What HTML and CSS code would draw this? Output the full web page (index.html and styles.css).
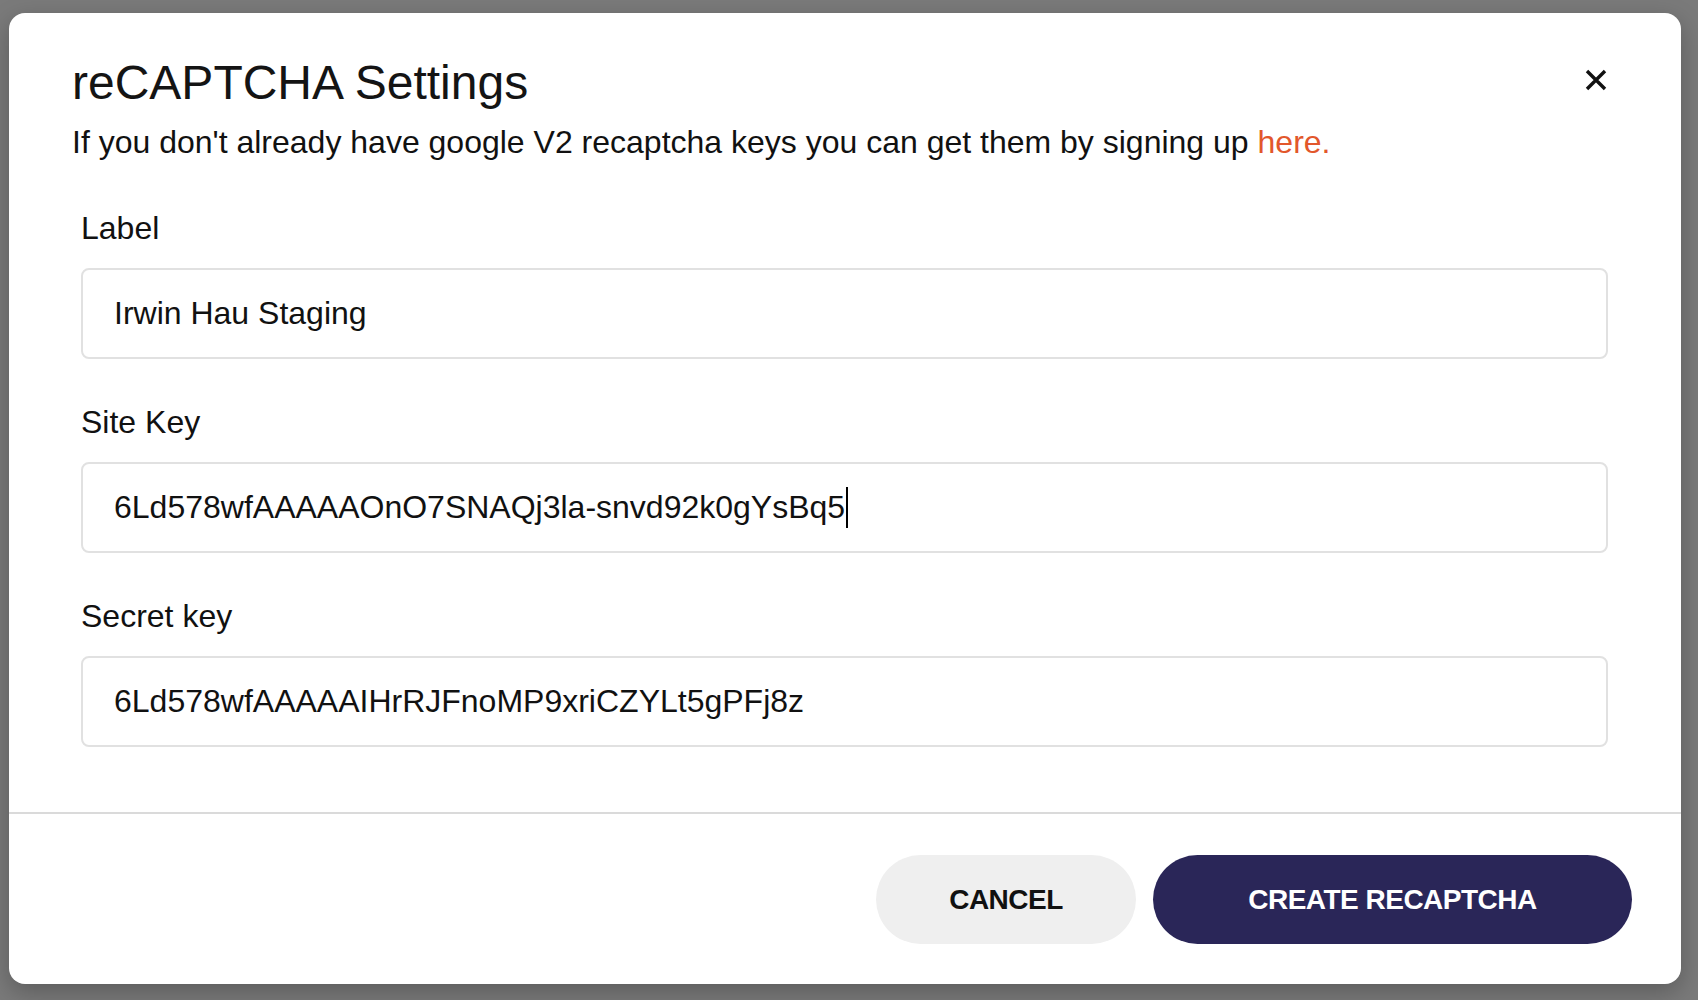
FILE: index.html
```html
<!DOCTYPE html>
<html lang="en">
<head>
  <meta charset="UTF-8">
  <title>reCAPTCHA Settings</title>
  <meta name="viewport" content="width=device-width, initial-scale=1.0">
  <link rel="stylesheet" href="styles.css">
</head>
<body>

  <!-- Dialog -->
  <div class="modal">
    <header class="modal-head">
      <div class="head-row">
        <h2>reCAPTCHA Settings</h2>
        <button class="close-btn" aria-label="Close">
          <svg width="22" height="22" viewBox="0 0 22 22">
            <path d="M2 2 L20 20 M20 2 L2 20" stroke="#111" stroke-width="3.4" fill="none"/>
          </svg>
        </button>
      </div>
      <p class="intro">If you don't already have google V2 recaptcha keys you can get them by signing up <a href="#">here.</a></p>
    </header>

    <div class="modal-body">
      <div class="field">
        <label>Label</label>
        <div class="text-box">Irwin Hau Staging</div>
      </div>
      <div class="field">
        <label>Site Key</label>
        <div class="text-box">6Ld578wfAAAAAOnO7SNAQj3la-snvd92k0gYsBq5<span class="caret"></span></div>
      </div>
      <div class="field">
        <label>Secret key</label>
        <div class="text-box">6Ld578wfAAAAAIHrRJFnoMP9xriCZYLt5gPFj8z</div>
      </div>
    </div>

    <footer class="modal-foot">
      <button class="btn btn-cancel">CANCEL</button>
      <button class="btn btn-primary">CREATE RECAPTCHA</button>
    </footer>
  </div>

</body>
</html>
```

FILE: styles.css
```css
body {
  font-family: "Liberation Sans", Arial, sans-serif;
  background: #7a7a7a;
  margin: 0;
  padding: 13px 0 0 9px;
  height: 1000px;
  box-sizing: border-box;
  overflow: hidden;
  color: #111;
}

.modal {
  width: 1672px;
  background: #fff;
  border-radius: 16px;
  box-shadow: 0 8px 24px rgba(0,0,0,0.25);
  display: flex;
  flex-direction: column;
}

.modal-head {
  padding: 42px 74px 0 63px;
}

.head-row {
  display: flex;
  justify-content: space-between;
  align-items: flex-start;
}

.head-row h2 {
  margin: 0;
  font-size: 48px;
  line-height: 56px;
  font-weight: normal;
  color: #141414;
}

.close-btn {
  margin-top: 14px;
  padding: 0;
  border: none;
  background: none;
  cursor: pointer;
  width: 22px;
  height: 22px;
}

.close-btn svg {
  display: block;
}

.intro {
  margin: 11px 0 0;
  font-size: 32px;
  line-height: 40px;
}

.intro a {
  color: #e2572b;
  text-decoration: none;
}

.modal-body {
  padding: 46px 73px 65px 72px;
  display: flex;
  flex-direction: column;
  gap: 43px;
}

.field label {
  display: block;
  font-size: 32px;
  line-height: 40px;
  margin-bottom: 20px;
}

.text-box {
  height: 91px;
  box-sizing: border-box;
  border: 2px solid #e1e1e1;
  border-radius: 8px;
  padding: 0 31px;
  font-size: 32px;
  display: flex;
  align-items: center;
}

.caret {
  display: inline-block;
  width: 2px;
  height: 41px;
  background: #000;
  margin-left: 1px;
}

.modal-foot {
  border-top: 2px solid #dadada;
  padding: 41px 49px 40px 0;
  display: flex;
  justify-content: flex-end;
  gap: 17px;
}

.btn {
  height: 89px;
  border: none;
  border-radius: 45px;
  font-family: inherit;
  font-size: 28px;
  font-weight: bold;
  letter-spacing: -0.5px;
  cursor: pointer;
}

.btn-cancel {
  width: 260px;
  background: #efefef;
  color: #111;
}

.btn-primary {
  width: 479px;
  background: #2a2658;
  color: #fff;
}
```
